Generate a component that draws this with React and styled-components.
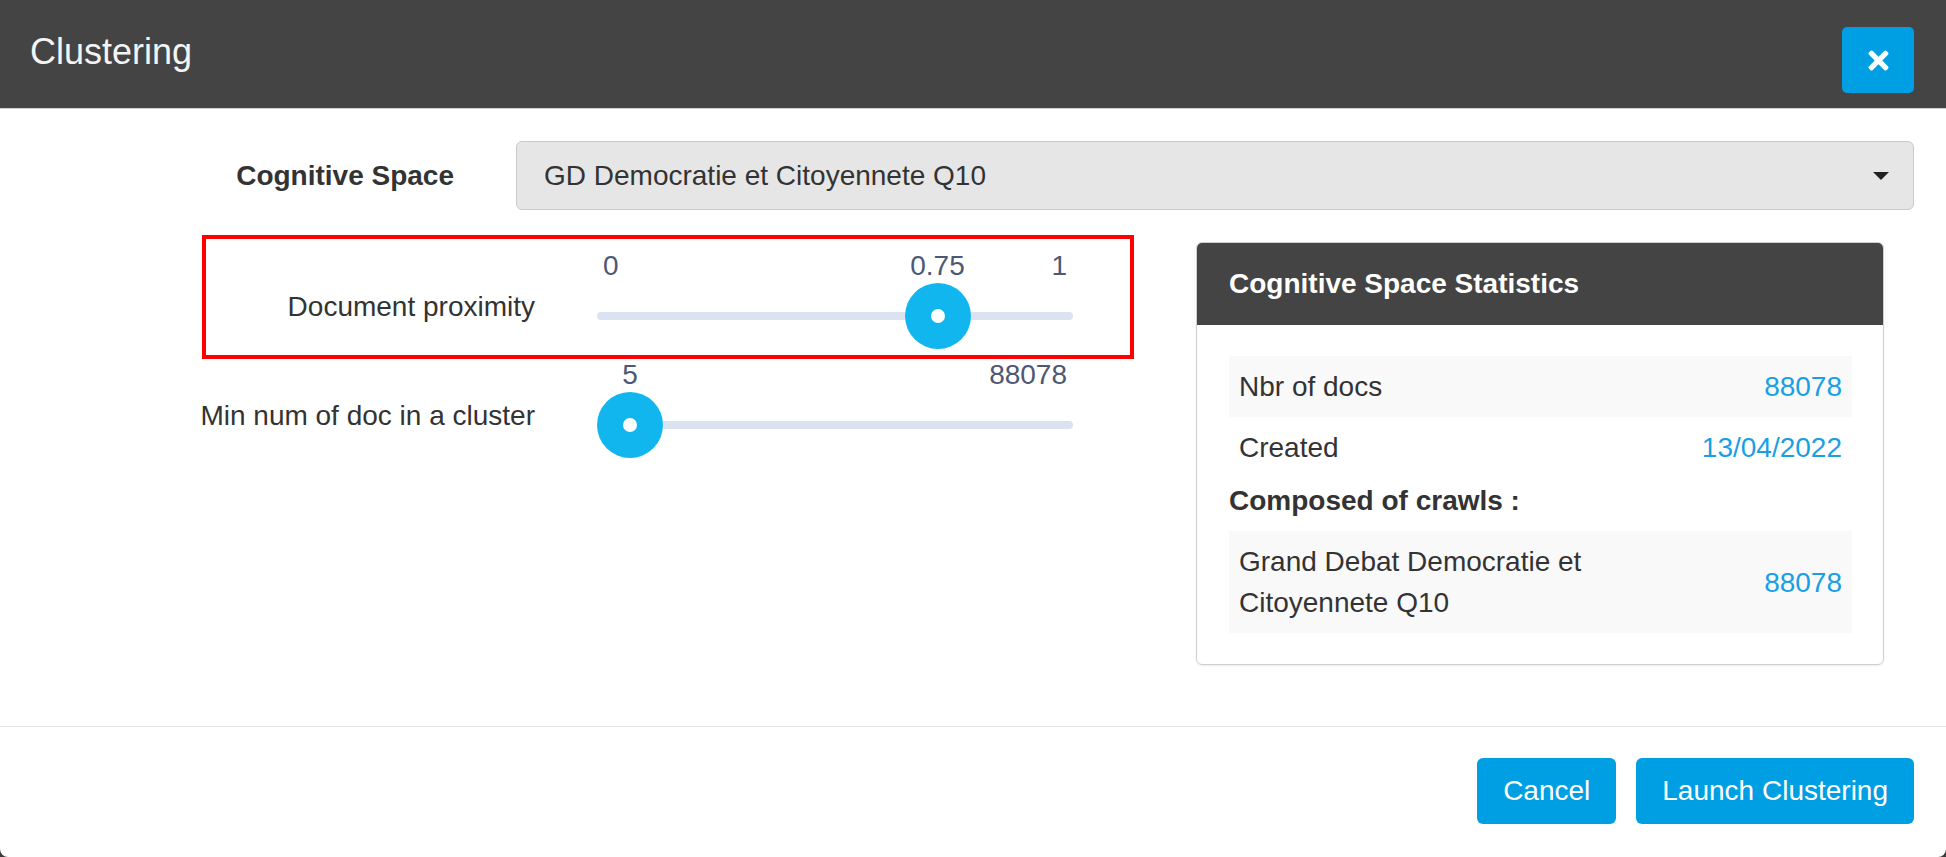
import React from "react";
import styled, { createGlobalStyle } from "styled-components";
import { FaTimes } from "react-icons/fa";

const GlobalStyle = createGlobalStyle`
	* {
		box-sizing: border-box;
	}
	html,
	body {
		margin: 0;
		padding: 0;
		background: #3b3b3b;
	}
	body {
		font-family: "Liberation Sans", Arial, Helvetica, sans-serif;
		font-size: 28px;
		color: #333;
	}
`;

const sliders = [
	{ label: "Document proximity", min: 0, max: 1, value: 0.75, highlight: true },
	{ label: "Min num of doc in a cluster", min: 5, max: 88078, value: 5 },
];

const stats = [
	{ name: "Nbr of docs", value: "88078", striped: true },
	{ name: "Created", value: "13/04/2022" },
];

const RangeSlider = ({ min, max, value }) => {
	const frac = (value - min) / (max - min);
	// thumb travels inside the track, 66px thumb on a 476px track
	const center = 33 + frac * (476 - 66);
	return (
		<SliderBox>
			{frac > 0.12 && <SliderLabel $side='left'>{min}</SliderLabel>}
			{frac < 0.88 && <SliderLabel $side='right'>{max}</SliderLabel>}
			<SingleLabel style={{ left: center }}>{value}</SingleLabel>
			<Track />
			<Thumb style={{ left: center - 33 }} />
		</SliderBox>
	);
};

const SliderLine = ({ label, min, max, value, indent }) => (
	<SliderRow $indent={indent}>
		<RowLabel>{label}</RowLabel>
		<RangeSlider min={min} max={max} value={value} />
	</SliderRow>
);

const App = () => {
	return (
		<>
			<GlobalStyle />
			<Modal>
				<Header>
					<Title>Clustering</Title>
					<CloseButton>
						<FaTimes />
					</CloseButton>
				</Header>
				<Body>
					<FormRow>
						<FormLabel>Cognitive Space</FormLabel>
						<Select>
							<span>GD Democratie et Citoyennete Q10</span>
							<Caret />
						</Select>
					</FormRow>
					<Content>
						<SlidersColumn>
							{sliders.map((s) =>
								s.highlight ? (
									<Highlight key={s.label}>
										<SliderLine {...s} />
									</Highlight>
								) : (
									<SliderLine key={s.label} {...s} indent />
								)
							)}
						</SlidersColumn>
						<Panel>
							<PanelHeader>Cognitive Space Statistics</PanelHeader>
							<PanelBody>
								{stats.map((s) => (
									<StatRow key={s.name} $striped={s.striped}>
										<StatName>{s.name}</StatName>
										<StatValue>{s.value}</StatValue>
									</StatRow>
								))}
								<SubHeading>Composed of crawls :</SubHeading>
								<StatRow $striped>
									<StatName $wrap>Grand Debat Democratie et Citoyennete Q10</StatName>
									<StatValue>88078</StatValue>
								</StatRow>
							</PanelBody>
						</Panel>
					</Content>
				</Body>
				<Footer>
					<Button>Cancel</Button>
					<Button>Launch Clustering</Button>
				</Footer>
			</Modal>
		</>
	);
};

export default App;

const Modal = styled.div`
	width: 100%;
	height: 857px;
	background: #fff;
	display: flex;
	flex-direction: column;
	border-radius: 0 0 8px 8px;
	overflow: hidden;
`;

const Header = styled.div`
	height: 109px;
	flex-shrink: 0;
	background: #444;
	border-bottom: 1px solid #d0d0d0;
	display: flex;
	justify-content: space-between;
	align-items: flex-start;
	padding: 0 32px 0 30px;
`;

const Title = styled.div`
	font-size: 36px;
	line-height: 40px;
	margin-top: 32px;
	color: #f4f4f4;
`;

const CloseButton = styled.div`
	width: 72px;
	height: 66px;
	margin-top: 27px;
	background: #009fe3;
	border-radius: 5px;
	color: #fff;
	font-size: 29px;
	display: flex;
	justify-content: center;
	align-items: center;
`;

const Body = styled.div`
	flex: 1;
	padding: 32px 32px 0 30px;
`;

const FormRow = styled.div`
	display: flex;
	align-items: center;
`;

const FormLabel = styled.div`
	width: 424px;
	text-align: right;
	font-weight: bold;
`;

const Select = styled.div`
	flex: 1;
	margin-left: 62px;
	height: 69px;
	background: #e6e6e6;
	border: 1px solid #cacaca;
	border-radius: 6px;
	display: flex;
	align-items: center;
	justify-content: space-between;
	padding: 0 24px 0 27px;
`;

const Caret = styled.span`
	width: 0;
	height: 0;
	border-left: 8px solid transparent;
	border-right: 8px solid transparent;
	border-top: 8px solid #222;
`;

const Content = styled.div`
	display: flex;
	align-items: flex-start;
	margin-top: 25px;
`;

const SlidersColumn = styled.div`
	flex: 1;
`;

const Highlight = styled.div`
	width: 932px;
	margin-left: 172px;
	border: 4px solid #f00;
	padding: 11px 0 5px 0;
`;

const SliderRow = styled.div`
	display: flex;
	height: 100px;
	margin-left: ${(p) => (p.$indent ? "176px" : "0")};
`;

const RowLabel = styled.div`
	width: 329px;
	display: flex;
	justify-content: flex-end;
	white-space: nowrap;
	padding-top: 41px;
	line-height: 32px;
`;

const SliderBox = styled.div`
	position: relative;
	width: 476px;
	height: 100px;
	margin-left: 62px;
`;

const SliderLabel = styled.span`
	position: absolute;
	top: 0;
	${(p) => (p.$side === "left" ? "left: 0;" : "right: 0;")}
	padding: 0 6px;
	line-height: 32px;
	color: #4d5974;
`;

const SingleLabel = styled.span`
	position: absolute;
	top: 0;
	transform: translateX(-50%);
	line-height: 32px;
	color: #4d5974;
	white-space: nowrap;
`;

const Track = styled.div`
	position: absolute;
	left: 0;
	right: 0;
	top: 62px;
	height: 8px;
	border-radius: 4px;
	background: #dbe2f2;
`;

const Thumb = styled.div`
	position: absolute;
	top: 33px;
	width: 66px;
	height: 66px;
	border-radius: 50%;
	background: #12b6ee;
	display: flex;
	justify-content: center;
	align-items: center;
	&::after {
		content: "";
		width: 14px;
		height: 14px;
		border-radius: 50%;
		background: #fff;
	}
`;

const Panel = styled.div`
	width: 688px;
	margin: 7px 30px 0 30px;
	border: 1px solid #cfcfcf;
	border-radius: 6px;
	overflow: hidden;
	box-shadow: 0 1px 2px rgba(0, 0, 0, 0.08);
`;

const PanelHeader = styled.div`
	height: 82px;
	background: #444;
	color: #fff;
	font-weight: bold;
	display: flex;
	align-items: center;
	padding-left: 32px;
`;

const PanelBody = styled.div`
	padding: 31px 31px 31px 32px;
`;

const StatRow = styled.div`
	display: flex;
	justify-content: space-between;
	align-items: center;
	padding: 10px;
	line-height: 41px;
	background: ${(p) => (p.$striped ? "#f9f9f9" : "transparent")};
`;

const StatName = styled.div`
	max-width: ${(p) => (p.$wrap ? "380px" : "none")};
`;

const StatValue = styled.div`
	color: #1a9fe2;
`;

const SubHeading = styled.div`
	font-weight: bold;
	line-height: 41px;
	margin: 2px 0 10px 0;
`;

const Footer = styled.div`
	flex-shrink: 0;
	border-top: 1px solid #e5e5e5;
	padding: 31px 32px 33px;
	display: flex;
	justify-content: flex-end;
	gap: 20px;
`;

const Button = styled.button`
	height: 66px;
	padding: 0 26px;
	background: #009fe3;
	color: #fff;
	border: none;
	border-radius: 6px;
	font-family: inherit;
	font-size: 28px;
	cursor: pointer;
`;
